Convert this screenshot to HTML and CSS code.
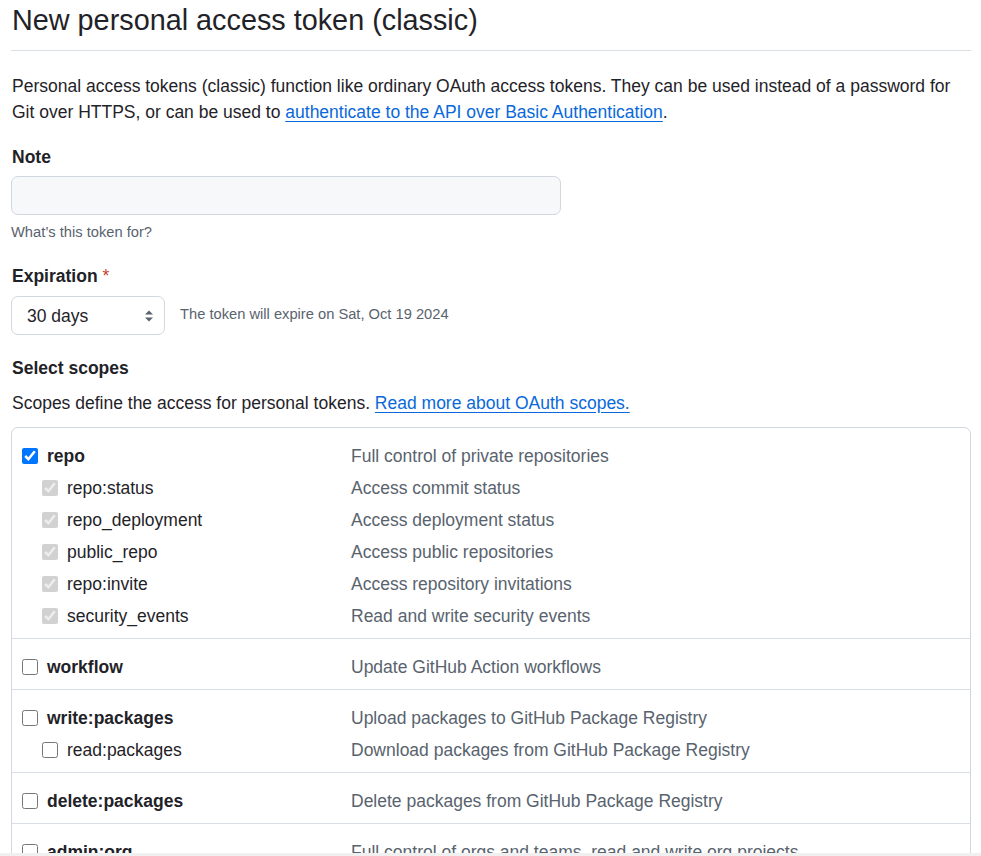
FILE: index.html
```html
<!DOCTYPE html>
<html lang="en">
<head>
<meta charset="utf-8">
<title>New personal access token (classic)</title>
<link rel="stylesheet" href="styles.css">
</head>
<body>
<div class="page">
  <div class="subhead">
    <h2 class="subhead-heading">New personal access token (classic)</h2>
  </div>
  <p class="intro">Personal access tokens (classic) function like ordinary OAuth access tokens. They can be used instead of a password for Git over HTTPS, or can be used to <a href="#" class="link">authenticate to the API over Basic Authentication</a>.</p>

  <div class="form-group">
    <label class="label" for="note">Note</label>
    <input id="note" class="text-input" type="text">
    <p class="hint">What’s this token for?</p>
  </div>

  <div class="form-group">
    <div class="label">Expiration <span class="required">*</span></div>
    <div class="expire-row">
      <div class="select">
        <span>30 days</span>
        <svg class="select-arrows" width="10" height="14" viewBox="0 0 10 14"><path d="M5 1.5L9 5.5H1z M5 12.5L1 8.5h8z" fill="#59636e"/></svg>
      </div>
      <span class="hint">The token will expire on Sat, Oct 19 2024</span>
    </div>
  </div>

  <div class="form-group">
    <div class="label">Select scopes</div>
    <p class="scopes-intro">Scopes define the access for personal tokens. <a href="#" class="link">Read more about OAuth scopes.</a></p>
    <div class="scopes">
      <div class="group">
        <div class="row"><label class="name main"><input type="checkbox" checked>repo</label><span class="desc">Full control of private repositories</span></div>
        <div class="row"><label class="name sub"><input type="checkbox" checked disabled>repo:status</label><span class="desc">Access commit status</span></div>
        <div class="row"><label class="name sub"><input type="checkbox" checked disabled>repo_deployment</label><span class="desc">Access deployment status</span></div>
        <div class="row"><label class="name sub"><input type="checkbox" checked disabled>public_repo</label><span class="desc">Access public repositories</span></div>
        <div class="row"><label class="name sub"><input type="checkbox" checked disabled>repo:invite</label><span class="desc">Access repository invitations</span></div>
        <div class="row"><label class="name sub"><input type="checkbox" checked disabled>security_events</label><span class="desc">Read and write security events</span></div>
      </div>
      <div class="group">
        <div class="row"><label class="name main"><input type="checkbox">workflow</label><span class="desc">Update GitHub Action workflows</span></div>
      </div>
      <div class="group">
        <div class="row"><label class="name main"><input type="checkbox">write:packages</label><span class="desc">Upload packages to GitHub Package Registry</span></div>
        <div class="row"><label class="name sub"><input type="checkbox">read:packages</label><span class="desc">Download packages from GitHub Package Registry</span></div>
      </div>
      <div class="group">
        <div class="row"><label class="name main"><input type="checkbox">delete:packages</label><span class="desc">Delete packages from GitHub Package Registry</span></div>
      </div>
      <div class="group">
        <div class="row"><label class="name main"><input type="checkbox">admin:org</label><span class="desc">Full control of orgs and teams, read and write org projects</span></div>
        <div class="row"><label class="name sub"><input type="checkbox">write:org</label><span class="desc">Read and write org and team membership, read and write org projects</span></div>
        <div class="row"><label class="name sub"><input type="checkbox">read:org</label><span class="desc">Read org and team membership, read org projects</span></div>
      </div>
    </div>
  </div>
</div>
<div class="scrollbar"></div>
</body>
</html>
```

FILE: styles.css
```css
html, body {
  margin: 0;
  padding: 0;
  background: #ffffff;
  overflow: hidden;
}

body {
  font-family: "Liberation Sans", Arial, sans-serif;
  font-size: 17.5px;
  line-height: 26px;
  color: #1f2328;
}

.page {
  padding: 0 10px 0 11px;
}

.subhead {
  border-bottom: 1px solid #d8dee4;
  padding-bottom: 10px;
}

.subhead-heading {
  margin: 0;
  font-size: 28.8px;
  font-weight: 400;
  line-height: 40px;
  padding-left: 1px;
}

.intro {
  margin: 22px 0 0;
  padding-left: 1px;
}

.link {
  color: #0969da;
  text-decoration: underline;
  text-underline-offset: 3px;
}

.form-group {
  margin-top: 19px;
}

.form-group + .form-group {
  margin-top: 20px;
}

.label {
  display: block;
  font-weight: 700;
  padding-left: 1px;
}

.required {
  color: #c5412c;
  font-weight: 400;
}

.text-input {
  display: block;
  box-sizing: border-box;
  width: 550px;
  height: 39px;
  margin: 6px 0 0;
  background: #f6f8fa;
  border: 1px solid #d0d7de;
  border-radius: 7px;
  font: inherit;
}

.hint {
  margin: 6px 0 0;
  font-size: 14.7px;
  line-height: 22px;
  color: #59636e;
}

.expire-row {
  display: flex;
  align-items: center;
  gap: 15px;
  margin-top: 7px;
}

.expire-row .hint {
  margin: 0;
  padding-bottom: 3px;
}

.select {
  box-sizing: border-box;
  width: 154px;
  height: 39px;
  display: flex;
  align-items: center;
  justify-content: space-between;
  padding: 0 10px 0 15px;
  border: 1px solid #d0d7de;
  border-radius: 7px;
  background: #ffffff;
  font-size: 17.5px;
}

.select-arrows {
  display: block;
}

.scopes-intro {
  margin: 9px 0 0;
  padding-left: 1px;
}

.scopes {
  margin-top: 11px;
  border: 1px solid #d0d7de;
  border-radius: 7px;
}

.group {
  padding: 10px 10px 8px;
  border-bottom: 1px solid #d8dee4;
}

.group:last-child {
  border-bottom: 0;
}

.row {
  display: grid;
  grid-template-columns: 329px 1fr;
  align-items: center;
  box-sizing: border-box;
  height: 32px;
  padding-top: 3px;
}

.name {
  display: flex;
  align-items: center;
  gap: 9px;
}

.name.main {
  font-weight: 700;
}

.name.sub {
  padding-left: 20px;
}

.name input {
  width: 16px;
  height: 16px;
  margin: 0;
}

.desc {
  color: #59636e;
}

.scrollbar {
  position: fixed;
  left: 0;
  right: 0;
  bottom: 0;
  height: 3px;
  background: #f0f0f0;
}
```
